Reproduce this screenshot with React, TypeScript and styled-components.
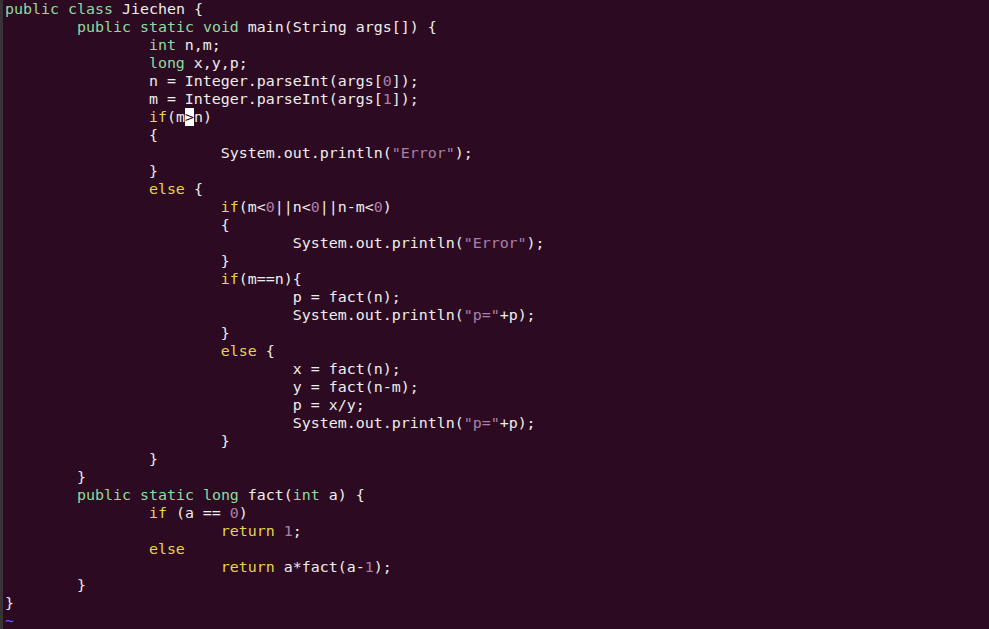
import React from "react";
import styled, { createGlobalStyle } from "styled-components";

const Global = createGlobalStyle`
  html, body { margin: 0; padding: 0; background: #2c0a22; }
  body { overflow: hidden; }
`;

const Screen = styled.div`
  display: flex;
  width: 989px;
  height: 629px;
  background: #2c0a22;
  overflow: hidden;
`;

const Edge = styled.div`
  width: 3px;
  flex: none;
  background: #3b3238;
`;

const Editor = styled.pre`
  margin: 0;
  padding: 0 0 0 2px;
  flex: 1;
  font-family: "DejaVu Sans Mono", monospace;
  font-size: 14.95px;
  line-height: 18px;
  color: #eeeeec;
  tab-size: 8;
  white-space: pre;
`;

const Line = styled.div`
  height: 18px;
`;

const Kw = styled.span`color: #8fdca0;`;
const Ctl = styled.span`color: #e6d44c;`;
const Lit = styled.span`color: #ad7fa8;`;
const Tilde = styled.span`color: #5c5cff;`;
const Cursor = styled.span`
  background: #ffffff;
  color: #2c0a22;
`;

const T = "\t";

export default function App() {
  return (
    <Screen>
      <Global />
      <Edge />
      <Editor>
        <Line><Kw>public</Kw> <Kw>class</Kw> Jiechen {"{"}</Line>
        <Line>{T}<Kw>public</Kw> <Kw>static</Kw> <Kw>void</Kw> main(String args[]) {"{"}</Line>
        <Line>{T}{T}<Kw>int</Kw> n,m;</Line>
        <Line>{T}{T}<Kw>long</Kw> x,y,p;</Line>
        <Line>{T}{T}n = Integer.parseInt(args[<Lit>0</Lit>]);</Line>
        <Line>{T}{T}m = Integer.parseInt(args[<Lit>1</Lit>]);</Line>
        <Line>{T}{T}<Ctl>if</Ctl>(m<Cursor>&gt;</Cursor>n)</Line>
        <Line>{T}{T}{"{"}</Line>
        <Line>{T}{T}{T}System.out.println(<Lit>"Error"</Lit>);</Line>
        <Line>{T}{T}{"}"}</Line>
        <Line>{T}{T}<Ctl>else</Ctl> {"{"}</Line>
        <Line>{T}{T}{T}<Ctl>if</Ctl>(m&lt;<Lit>0</Lit>||n&lt;<Lit>0</Lit>||n-m&lt;<Lit>0</Lit>)</Line>
        <Line>{T}{T}{T}{"{"}</Line>
        <Line>{T}{T}{T}{T}System.out.println(<Lit>"Error"</Lit>);</Line>
        <Line>{T}{T}{T}{"}"}</Line>
        <Line>{T}{T}{T}<Ctl>if</Ctl>(m==n){"{"}</Line>
        <Line>{T}{T}{T}{T}p = fact(n);</Line>
        <Line>{T}{T}{T}{T}System.out.println(<Lit>"p="</Lit>+p);</Line>
        <Line>{T}{T}{T}{"}"}</Line>
        <Line>{T}{T}{T}<Ctl>else</Ctl> {"{"}</Line>
        <Line>{T}{T}{T}{T}x = fact(n);</Line>
        <Line>{T}{T}{T}{T}y = fact(n-m);</Line>
        <Line>{T}{T}{T}{T}p = x/y;</Line>
        <Line>{T}{T}{T}{T}System.out.println(<Lit>"p="</Lit>+p);</Line>
        <Line>{T}{T}{T}{"}"}</Line>
        <Line>{T}{T}{"}"}</Line>
        <Line>{T}{"}"}</Line>
        <Line>{T}<Kw>public</Kw> <Kw>static</Kw> <Kw>long</Kw> fact(<Kw>int</Kw> a) {"{"}</Line>
        <Line>{T}{T}<Ctl>if</Ctl> (a == <Lit>0</Lit>)</Line>
        <Line>{T}{T}{T}<Ctl>return</Ctl> <Lit>1</Lit>;</Line>
        <Line>{T}{T}<Ctl>else</Ctl></Line>
        <Line>{T}{T}{T}<Ctl>return</Ctl> a*fact(a-<Lit>1</Lit>);</Line>
        <Line>{T}{"}"}</Line>
        <Line>{"}"}</Line>
        <Line><Tilde>~</Tilde></Line>
      </Editor>
    </Screen>
  );
}
